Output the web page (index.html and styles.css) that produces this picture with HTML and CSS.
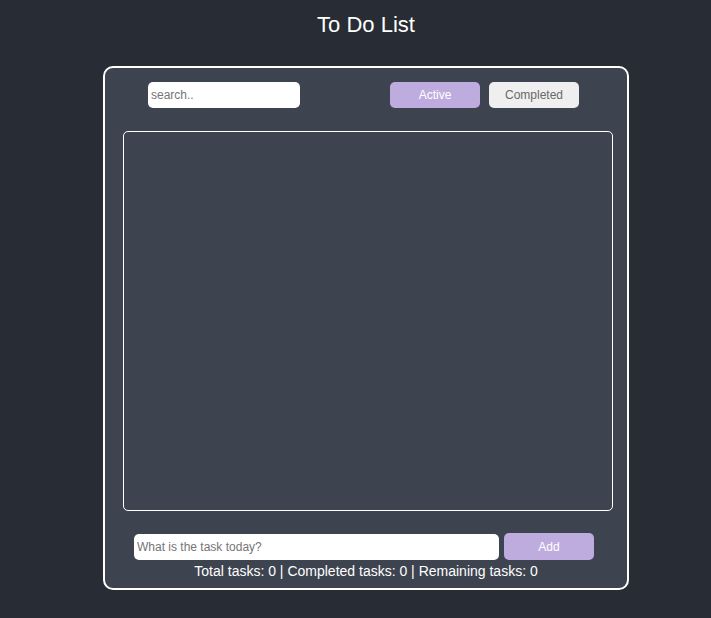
FILE: index.html
```html
<!DOCTYPE html>
<html lang="en">
<head>
<meta charset="utf-8">
<title>To Do List</title>
<link rel="stylesheet" href="styles.css">
</head>
<body>
<h1 class="title">To Do List</h1>
<main class="card">
  <div class="toolbar">
    <input class="field search" type="text" placeholder="search.." aria-label="Search tasks">
    <div class="filters">
      <button class="btn btn-primary" type="button">Active</button>
      <button class="btn" type="button">Completed</button>
    </div>
  </div>
  <ul class="tasks"></ul>
  <form class="add-form">
    <input class="field new-task" type="text" placeholder="What is the task today?" aria-label="New task">
    <button class="btn btn-primary btn-add" type="button">Add</button>
  </form>
  <p class="summary">Total tasks: 0 | Completed tasks: 0 | Remaining tasks: 0</p>
</main>
</body>
</html>
```
FILE: styles.css
```css
* {
  box-sizing: border-box;
}

body {
  margin: 0;
  padding: 12px 20px 28px;
  min-height: 100vh;
  display: flex;
  flex-direction: column;
  align-items: center;
  background: #282c34;
  color: #fff;
  font-family: "Liberation Sans", Arial, sans-serif;
}

.title {
  margin: 0 0 28px 21px;
  font-size: 22px;
  line-height: 26px;
  font-weight: 400;
}

.card {
  flex: 1;
  width: 100%;
  max-width: 526px;
  margin-left: 21px;
  padding: 14px 14px 8px 18px;
  display: flex;
  flex-direction: column;
  border: 2px solid #fff;
  border-radius: 10px;
  background: #3e444f;
}

.toolbar {
  display: flex;
  justify-content: space-between;
  padding: 0 34px 0 25px;
}

.filters {
  display: flex;
  gap: 9px;
}

.field {
  height: 26px;
  padding: 0 3px;
  border: 0;
  border-radius: 5px;
  background: #fff;
  font-family: inherit;
  font-size: 12px;
}

.field::placeholder {
  color: #757575;
}

.search {
  width: 152px;
}

.btn {
  width: 90px;
  height: 26px;
  padding: 0;
  border: 0;
  border-radius: 5px;
  background: #efefef;
  color: #696969;
  font-family: inherit;
  font-size: 12px;
}

.btn-primary {
  background: #bfacdf;
  color: #fff;
}

.tasks {
  flex: 1;
  margin: 23px 0 22px;
  padding: 0;
  list-style: none;
  border: 1px solid #fff;
  border-radius: 5px;
}

.add-form {
  display: flex;
  align-items: center;
  gap: 5px;
  padding: 0 19px 0 11px;
}

.new-task {
  flex: 1;
  min-width: 0;
}

.btn-add {
  height: 27px;
}

.summary {
  margin: 3px 4px 0 0;
  text-align: center;
  font-size: 14px;
  line-height: 17px;
}
```
